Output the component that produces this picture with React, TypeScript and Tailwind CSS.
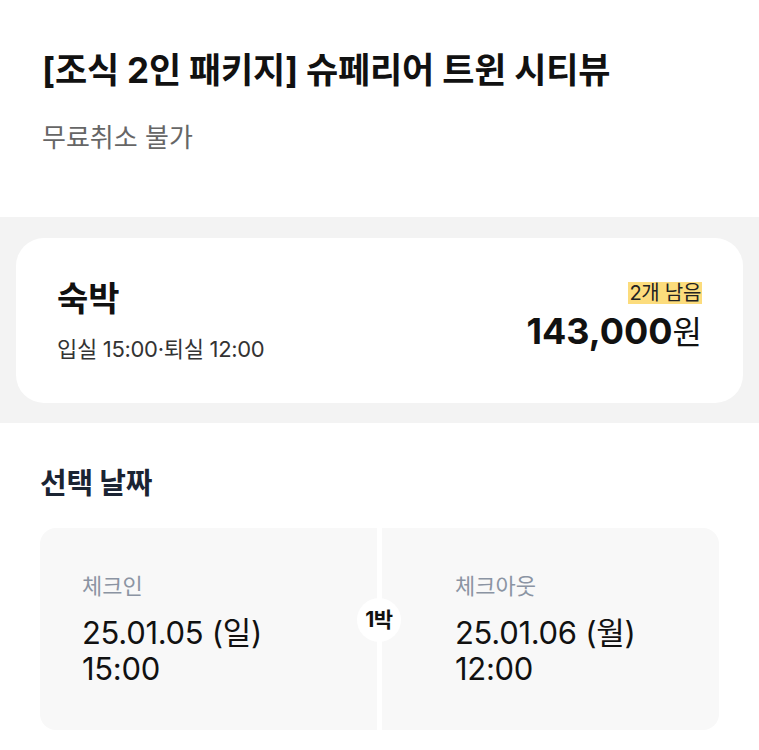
import React from "react";

const font = { fontFamily: "Inter, 'Noto Sans CJK KR', 'Noto Sans', sans-serif" };

export default function App() {
  return (
    <div className="w-[759px] h-[750px] bg-white overflow-hidden" style={font}>
      {/* Header */}
      <div className="px-[42px] pt-[48px] h-[217px]">
        <h1 className="text-[35px] leading-[44px] font-bold text-[#111] tracking-[-0.2px]">
          [조식 2인 패키지] 슈페리어 트윈 시티뷰
        </h1>
        <p className="mt-[30px] text-[26px] leading-[32px] text-[#666]">무료취소 불가</p>
      </div>

      {/* Gray band with card */}
      <div className="bg-[#f3f3f3] px-4 pt-[21px] pb-[20px]">
        <div className="bg-white rounded-[28px] h-[165px] pl-[41px] pr-[41px] flex items-center justify-between">
          <div className="flex flex-col">
            <div className="text-[34px] leading-[40px] font-bold text-[#111]">숙박</div>
            <div className="mt-[16px] text-[22px] leading-[28px] text-[#333] tracking-[-0.3px]">입실 15:00·퇴실 12:00</div>
          </div>
          <div className="flex flex-col items-end -mt-[6px]">
            <span className="bg-[#fcdc7c] text-[20px] leading-[22px] text-[#222] px-[1px] tracking-[-0.3px]">2개 남음</span>
            <div className="mt-[6px] flex items-baseline text-[#111]">
              <span className="text-[36px] leading-[42px] font-bold">143,000</span>
              <span className="text-[32px] leading-[42px] font-normal">원</span>
            </div>
          </div>
        </div>
      </div>

      {/* Selected dates */}
      <div className="px-[40px] pt-[42px]">
        <h2 className="text-[29px] leading-[38px] font-bold text-[#1b2433] tracking-[-0.3px]">선택 날짜</h2>
        <div className="relative mt-[25px] grid grid-cols-2 gap-[5px] h-[202px]">
          <div className="bg-[#f8f8f8] rounded-l-[16px] pl-[42px] pt-[43px]">
            <div className="text-[22px] leading-[30px] text-[#8b94a3]">체크인</div>
            <div className="mt-[14px] text-[31px] leading-[36px] text-[#111] tracking-[-0.3px]">25.01.05 (일)</div>
            <div className="text-[31px] leading-[36px] text-[#111] tracking-[-0.3px]">15:00</div>
          </div>
          <div className="bg-[#f8f8f8] rounded-r-[16px] pl-[73px] pt-[43px]">
            <div className="text-[22px] leading-[30px] text-[#8b94a3]">체크아웃</div>
            <div className="mt-[14px] text-[31px] leading-[36px] text-[#111] tracking-[-0.3px]">25.01.06 (월)</div>
            <div className="text-[31px] leading-[36px] text-[#111] tracking-[-0.3px]">12:00</div>
          </div>
          <div className="absolute left-[317px] top-[70px] w-[44px] h-[44px] rounded-full bg-white flex items-center justify-center text-[21px] font-bold text-[#111] tracking-[-0.5px]">
            1박
          </div>
        </div>
      </div>
    </div>
  );
}
